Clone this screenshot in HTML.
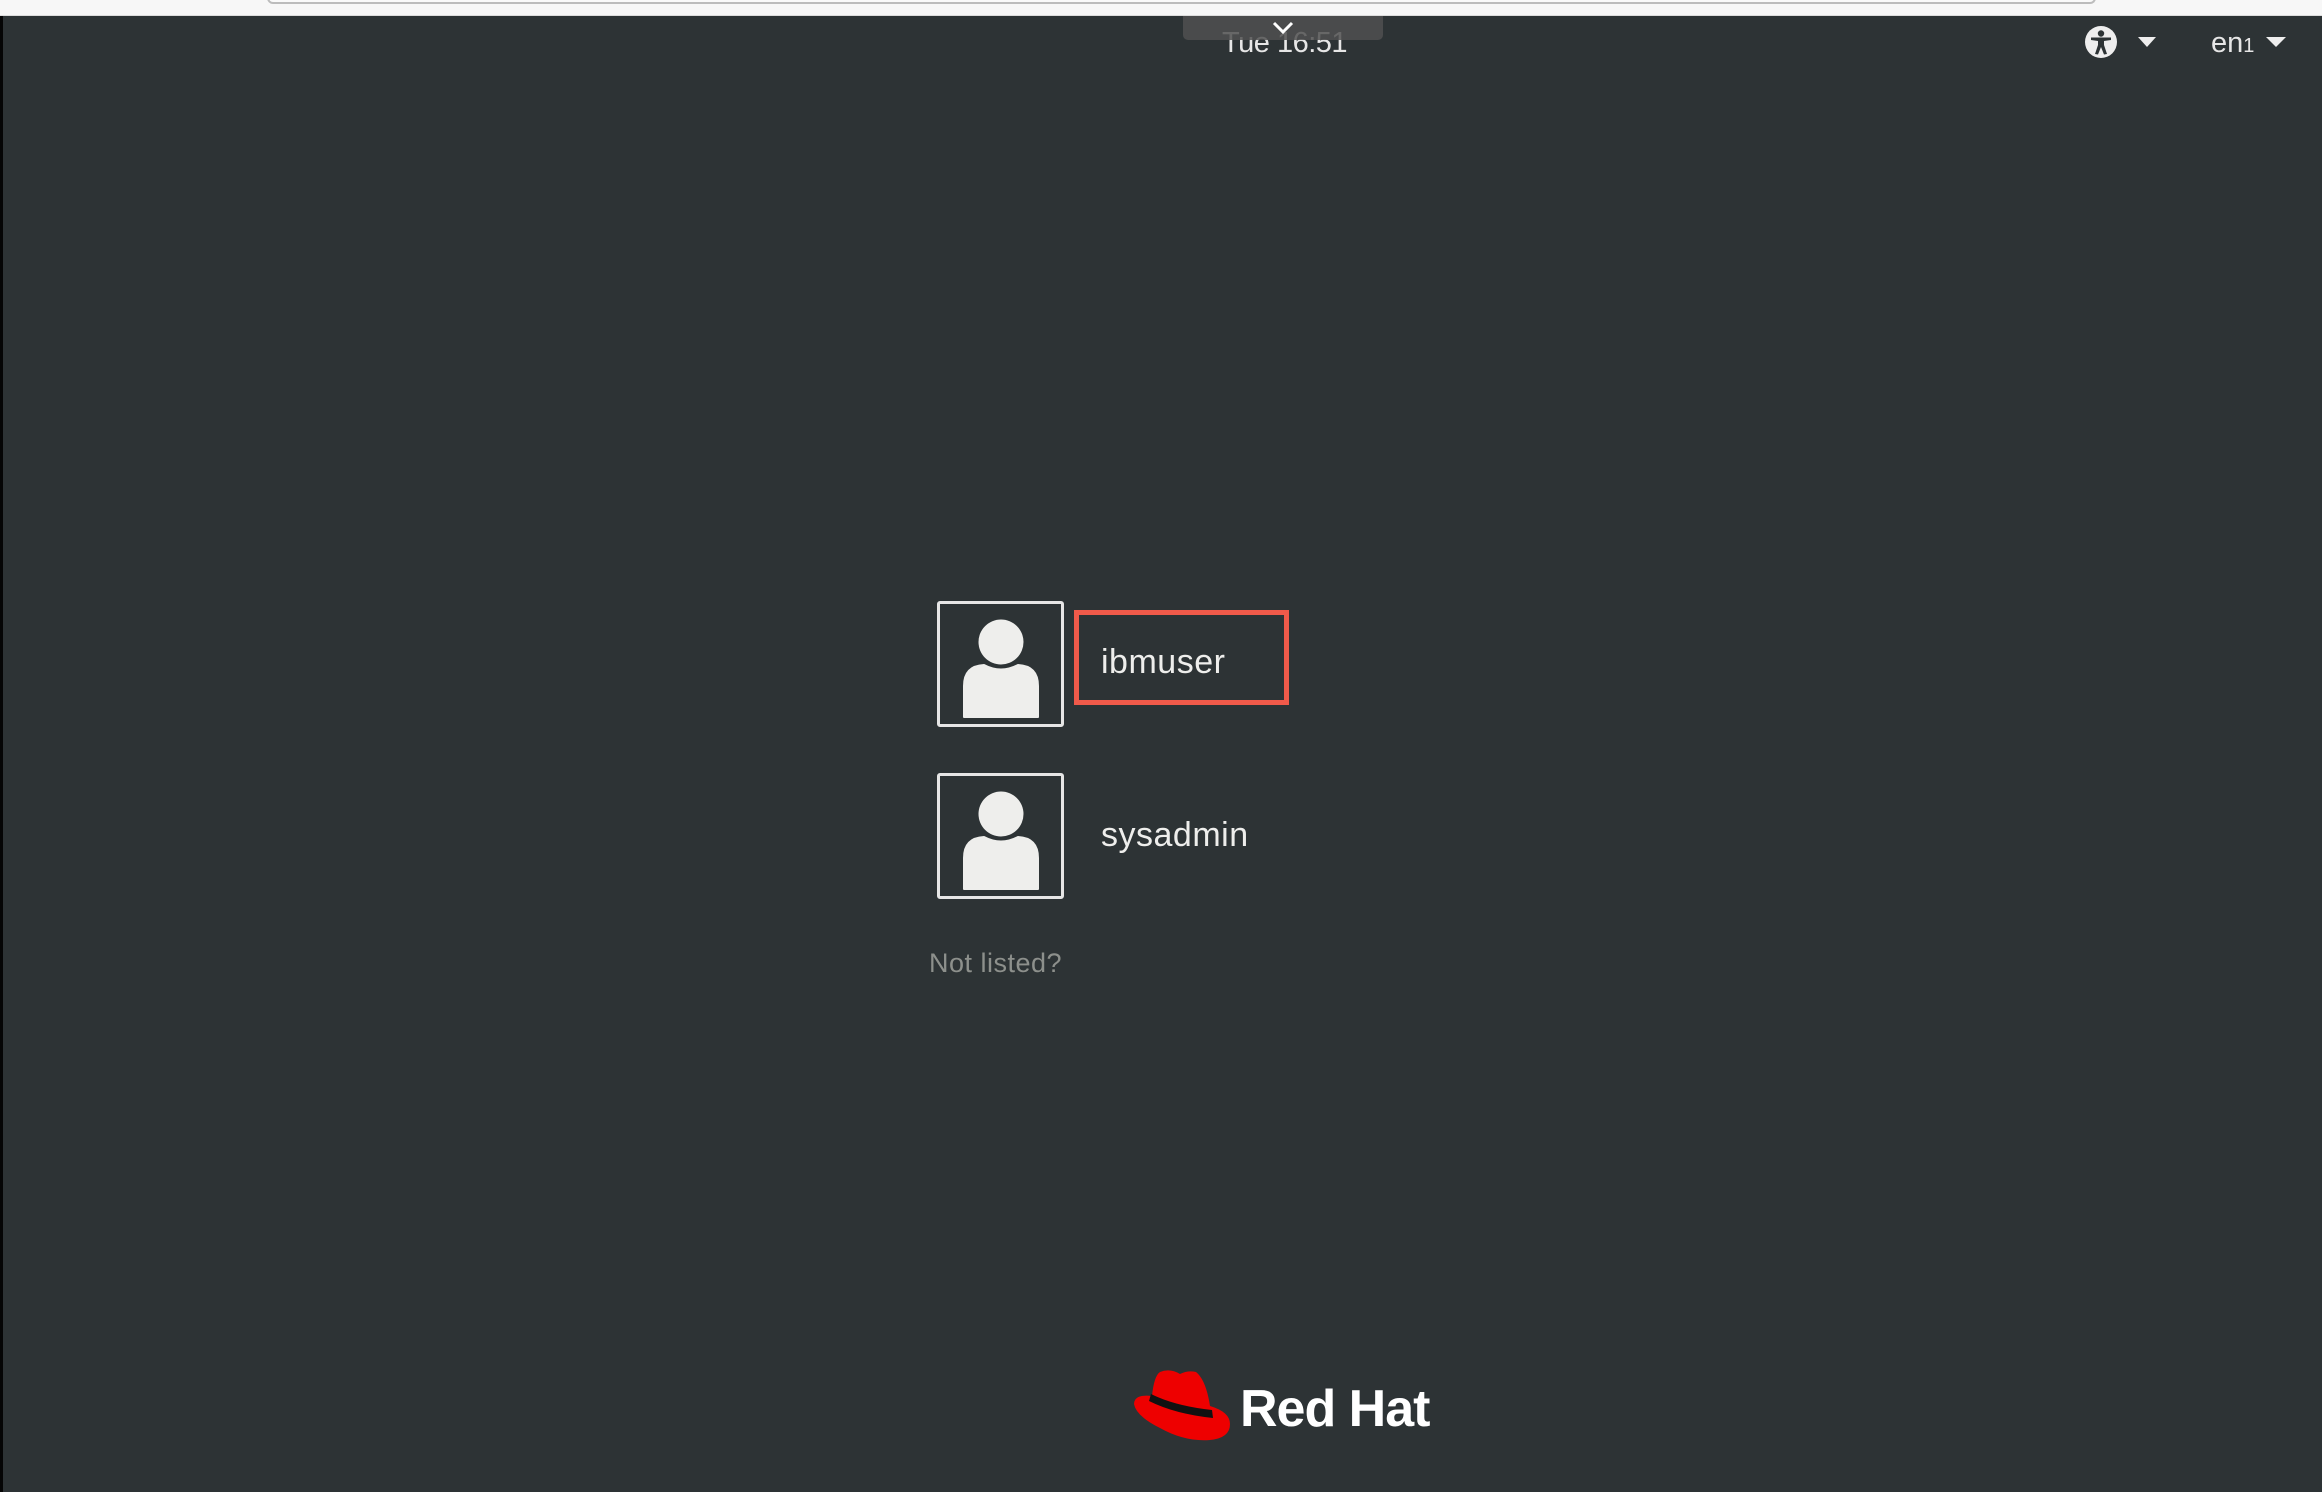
<!DOCTYPE html>
<html><head><meta charset="utf-8"><style>
html,body{margin:0;padding:0;width:2322px;height:1492px;overflow:hidden;background:#2d3335;font-family:"Liberation Sans","DejaVu Sans",sans-serif;}
.abs{position:absolute}
</style></head><body>
<div class="abs" style="left:0;top:0;width:2322px;height:15px;background:#f7f7f7;border-bottom:1px solid #ddd"></div>
<div class="abs" style="left:267px;top:-10px;width:1825px;height:12px;border:2px solid #bcbcbc;border-top:none;border-radius:0 0 6px 6px;background:#fafafa"></div>
<div class="abs" style="left:0;top:16px;width:3px;height:1476px;background:#050505"></div>
<div class="abs" style="left:1222px;top:27px;font-size:29px;color:#e6e6e6;letter-spacing:-0.5px">Tue 16:51</div>
<div class="abs" style="left:1183px;top:16px;width:200px;height:24px;background:rgba(80,80,80,0.85);border-radius:0 0 5px 5px"></div>
<svg class="abs" style="left:1271px;top:20px" width="24" height="16"><path d="M3 3 L12 12 L21 3" stroke="#fff" stroke-width="3" fill="none"/></svg>
<svg class="abs" style="left:2084px;top:25px" width="34" height="34" viewBox="0 0 34 34"><circle cx="17" cy="17" r="16" fill="#eee"/><circle cx="17" cy="8.5" r="3.2" fill="#2d3335"/><path d="M7 12.5 L27 12.5 L27 15 L20 16 L20 20 L23 29 L20 29.5 L17 22 L14 29.5 L11 29 L14 20 L14 16 L7 15Z" fill="#2d3335"/></svg>
<svg class="abs" style="left:2138px;top:36px" width="18" height="12"><path d="M0 1 L18 1 L9 11Z" fill="#eee"/></svg>
<div class="abs" style="left:2211px;top:27px;font-size:29px;color:#e6e6e6">en<span style="font-size:20px">1</span></div>
<svg class="abs" style="left:2266px;top:36px" width="20" height="12"><path d="M0 1 L20 1 L10 11Z" fill="#eee"/></svg>

<div class="abs" style="left:937px;top:601px;width:121px;height:120px;border:3px solid #e6e6e6;border-radius:3px"></div>
<svg class="abs" style="left:960px;top:618px" width="82" height="102" viewBox="0 0 82 102"><circle cx="41" cy="24" r="22.5" fill="#eeeeec"/><path d="M4 99 L4 68 Q4 48 24 47 Q41 56 58 47 Q78 48 78 68 L78 99 Z" fill="#eeeeec" stroke="#eeeeec" stroke-width="2" stroke-linejoin="round"/></svg>
<div class="abs" style="left:1074px;top:610px;width:205px;height:85px;border:5px solid #f05a4a"></div>
<div class="abs" style="left:1101px;top:643px;font-size:34px;color:#eeeeec;letter-spacing:0.5px">ibmuser</div>

<div class="abs" style="left:937px;top:773px;width:121px;height:120px;border:3px solid #e6e6e6;border-radius:3px"></div>
<svg class="abs" style="left:960px;top:790px" width="82" height="102" viewBox="0 0 82 102"><circle cx="41" cy="24" r="22.5" fill="#eeeeec"/><path d="M4 99 L4 68 Q4 48 24 47 Q41 56 58 47 Q78 48 78 68 L78 99 Z" fill="#eeeeec" stroke="#eeeeec" stroke-width="2" stroke-linejoin="round"/></svg>
<div class="abs" style="left:1101px;top:816px;font-size:34px;color:#eeeeec;letter-spacing:0.5px">sysadmin</div>

<div class="abs" style="left:929px;top:948px;font-size:27px;color:#8d908c;letter-spacing:0.5px">Not listed?</div>

<svg class="abs" style="left:1130px;top:1366px" width="106" height="80" viewBox="0 0 106 80"><path d="M22 30 Q24 10 30 6 Q40 2 50 8 Q58 4 66 6 Q76 14 80 40 Q100 46 100 58 Q100 72 80 74 Q55 76 30 62 Q6 50 4 38 Q4 28 22 30Z" fill="#ee0000"/><path d="M21 28 Q45 40 82 44 L83 52 Q45 48 19 35Z" fill="#111"/></svg>
<div class="abs" style="left:1240px;top:1379px;font-size:52px;font-weight:bold;color:#fff;letter-spacing:-1px">Red Hat</div>
</body></html>
